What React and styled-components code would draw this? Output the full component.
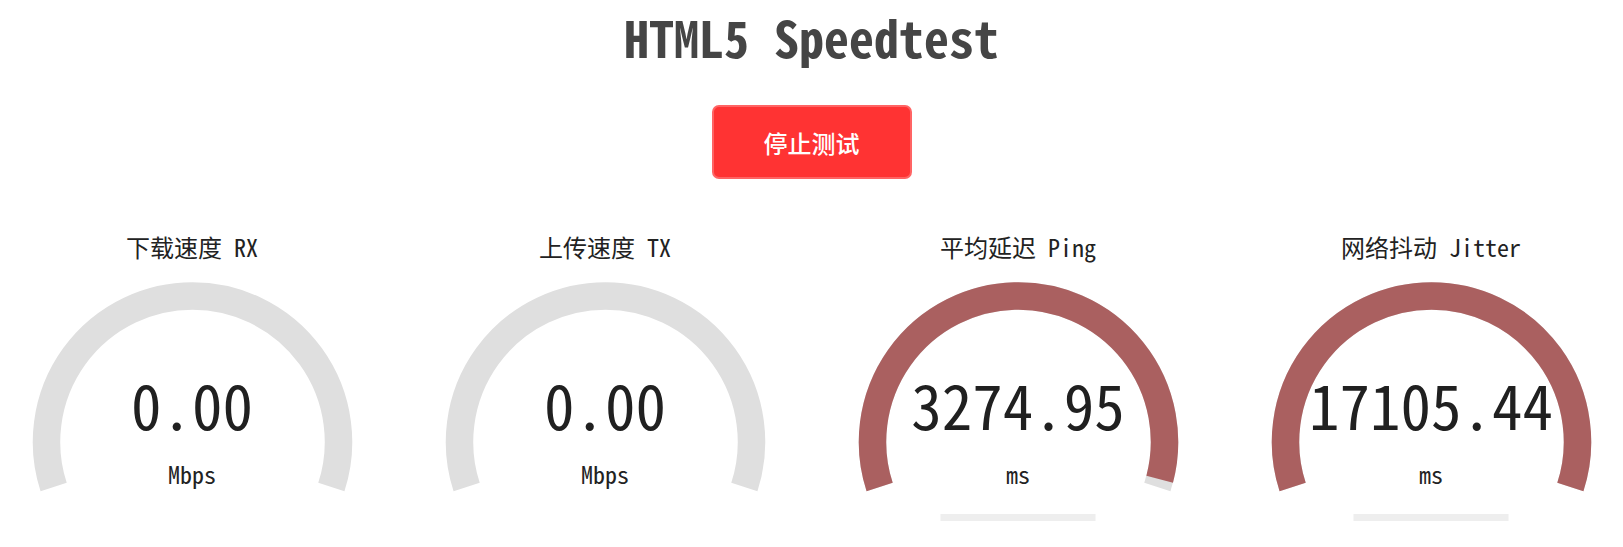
import React from "react";
import styled, { createGlobalStyle } from "styled-components";

const GlobalStyle = createGlobalStyle`
  html, body {
    margin: 0;
    padding: 0;
    background: #ffffff;
  }
  body {
    font-family: "Noto Sans Mono CJK SC", "Noto Sans CJK SC", "DejaVu Sans Mono", monospace;
    overflow: hidden;
  }
`;

const tests = [
  { label: "下载速度 RX", value: "0.00", unit: "Mbps", amount: 0, progress: 0 },
  { label: "上传速度 TX", value: "0.00", unit: "Mbps", amount: 0, progress: 0 },
  { label: "平均延迟 Ping", value: "3274.95", unit: "ms", amount: 0.985, progress: 1 },
  { label: "网络抖动 Jitter", value: "17105.44", unit: "ms", amount: 1, progress: 1 },
];

// arc geometry (svg units), like the canvas meter: starts at 162deg, sweeps 216deg
const W = 413;
const H = 268;
const CX = W / 2;
const CY = 180;
const R = 146;
const START = 162;
const SWEEP = 216;

function arcPath(amount) {
  const a0 = (START * Math.PI) / 180;
  const a1 = ((START + SWEEP * amount) * Math.PI) / 180;
  const x0 = CX + R * Math.cos(a0);
  const y0 = CY + R * Math.sin(a0);
  const x1 = CX + R * Math.cos(a1);
  const y1 = CY + R * Math.sin(a1);
  const large = SWEEP * amount > 180 ? 1 : 0;
  return `M ${x0} ${y0} A ${R} ${R} 0 ${large} 1 ${x1} ${y1}`;
}

function Meter({ amount, progress }) {
  return (
    <MeterSvg viewBox={`0 0 ${W} ${H}`} width={W} height={H}>
      <path d={arcPath(1)} stroke="#dfdfdf" strokeWidth="27.5" fill="none" />
      {amount > 0 && (
        <path d={arcPath(amount)} stroke="#aa6060" strokeWidth="27.5" fill="none" />
      )}
      {progress > 0 && (
        <rect x={CX - 78} y={252} width={155 * progress} height={7} fill="#eeeeee" />
      )}
    </MeterSvg>
  );
}

export default function App() {
  return (
    <>
      <GlobalStyle />
      <Page>
        <Title>HTML5 Speedtest</Title>
        <StopButton>停止测试</StopButton>
        <TestGroup>
          {tests.map((t) => (
            <TestArea key={t.label}>
              <TestName>{t.label}</TestName>
              <MeterBox>
                <Meter amount={t.amount} progress={t.progress} />
                <Readout>
                  <MeterText>{t.value}</MeterText>
                  <Unit>{t.unit}</Unit>
                </Readout>
              </MeterBox>
            </TestArea>
          ))}
        </TestGroup>
      </Page>
    </>
  );
}

const Page = styled.div`
  display: flex;
  flex-direction: column;
  align-items: center;
  padding-top: 6px;
  width: 100%;
`;

const Title = styled.h1`
  margin: 0;
  font-size: 50px;
  line-height: 60px;
  font-weight: bold;
  color: #454545;
`;

const StopButton = styled.button`
  margin-top: 39px;
  width: 200px;
  height: 74px;
  box-sizing: border-box;
  border: 2px solid #ff6464;
  border-radius: 7px;
  background: #ff3333;
  color: #ffffff;
  font-family: "Noto Sans CJK SC", sans-serif;
  font-size: 24px;
  font-weight: 500;
  cursor: pointer;
`;

const TestGroup = styled.div`
  margin-top: 53px;
  display: flex;
  justify-content: center;
  width: 100%;
`;

const TestArea = styled.div`
  flex: 0 0 ${W}px;
  display: flex;
  flex-direction: column;
  align-items: center;
`;

const TestName = styled.div`
  font-size: 24px;
  line-height: 30px;
  color: #222222;
`;

const MeterBox = styled.div`
  display: grid;
  width: ${W}px;
  height: ${H}px;
  & > * {
    grid-area: 1 / 1;
  }
`;

const MeterSvg = styled.svg`
  display: block;
`;

const Readout = styled.div`
  display: flex;
  flex-direction: column;
  align-items: center;
  padding-top: 111px;
`;

const MeterText = styled.div`
  font-size: 61px;
  line-height: 61px;
  color: #202020;
`;

const Unit = styled.div`
  margin-top: 28px;
  font-size: 24px;
  line-height: 24px;
  color: #222222;
`;
